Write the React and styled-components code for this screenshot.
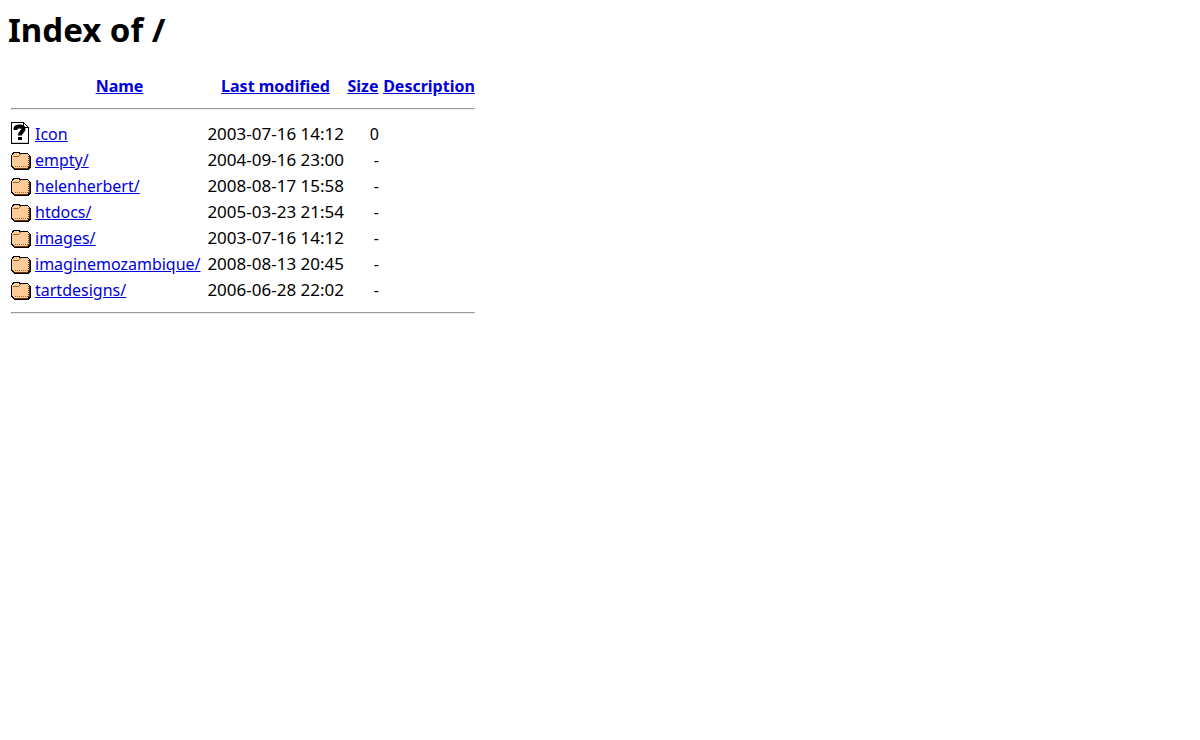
import React from 'react';
import styled, { createGlobalStyle } from 'styled-components';

const GlobalStyle = createGlobalStyle`
  body {
    margin: 8px;
    background: #fff;
    color: #000;
    font-family: "Noto Sans", "Open Sans", sans-serif;
    font-size: 16px;
    line-height: 22px;
  }
`;

const Title = styled.h1`
  margin: 0 0 19px;
  font-size: 33px;
  line-height: 44px;
  font-weight: 700;
`;

const Listing = styled.table`
  border-collapse: separate;
  border-spacing: 2px;
`;

const Column = styled.col`
  width: ${(p) => p.$width}px;
`;

const HeadCell = styled.th`
  padding: 2px 1px 0;
  font-weight: 700;
  text-align: center;
  white-space: nowrap;
`;

const Cell = styled.td`
  padding: 2px 1px 0;
  text-align: ${(p) => p.$align || 'left'};
  white-space: nowrap;
`;

const DateCell = styled(Cell)`
  padding: 2px 0 0;
  font-size: 17px;
`;

const IconCell = styled(Cell)`
  padding: 1px;
  vertical-align: top;
`;

const RuleCell = styled(Cell)`
  padding: 1px;
`;

const Link = styled.a`
  color: #0000dd;
  text-decoration: underline;
`;

const Rule = styled.hr`
  margin: 8px 0;
  border: 1px solid;
  border-color: #9a9a9a #eee #eee #9a9a9a;
`;

const Icon = styled.svg`
  display: block;
  width: 20px;
  height: 22px;
`;

const FolderIcon = () => (
  <Icon viewBox="0 0 20 22" shapeRendering="crispEdges" role="img" aria-label="Folder">
    <path d="M2 4H9V5H17V6H18V7H19V8H20V20H19V21H18V22H3V21H2V20H1V19H0V7H1V5H2Z" fill="#000" />
    <path d="M3 5H8V6H17V7H18V19H17V20H3V19H2V18H1V7H2V6H3Z" fill="#ffcc99" />
    <path d="M2 8H8V9H2ZM8 7H9V8H8ZM9 6H10V7H9Z" fill="#996633" />
    <path d="M18 8H19V19H18ZM3 20H17V21H3Z" fill="#663300" />
    <path d="M17.5 8V19" stroke="#664d33" strokeWidth="1" strokeDasharray="1 1" />
    <path d="M4 18.5H17" stroke="#996633" strokeWidth="1" strokeDasharray="1 1" />
  </Icon>
);

const UnknownIcon = () => (
  <Icon viewBox="0 0 20 22" role="img" aria-label="Unknown file">
    <g shapeRendering="crispEdges">
      <path d="M0 0H13V1H14V2H15V3H16V4H17V5H18V22H0Z" fill="#000" />
      <path d="M1 1H12V6H17V20H1Z" fill="#fff" />
      <path d="M13 2H14V3H15V4H16V5H13Z" fill="#fff" />
      <path d="M1 20H17V21H1Z" fill="#ccc" />
    </g>
    <path d="M4.5 8V7C4.5 5 6 4.5 8.5 4.5C11 4.5 12.5 5 12.5 7C12.5 9.5 9 9.5 9 13.5" fill="none" stroke="#000" strokeWidth="4" />
    <path d="M7 15H11V18H7Z" fill="#000" shapeRendering="crispEdges" />
  </Icon>
);

const widths = [22, 171, 137, 34, 94];

const headings = ['Name', 'Last modified', 'Size', 'Description'];

const entries = [
  { name: 'Icon', modified: '2003-07-16 14:12', size: '0' },
  { name: 'empty/', modified: '2004-09-16 23:00', size: '-' },
  { name: 'helenherbert/', modified: '2008-08-17 15:58', size: '-' },
  { name: 'htdocs/', modified: '2005-03-23 21:54', size: '-' },
  { name: 'images/', modified: '2003-07-16 14:12', size: '-' },
  { name: 'imaginemozambique/', modified: '2008-08-13 20:45', size: '-' },
  { name: 'tartdesigns/', modified: '2006-06-28 22:02', size: '-' },
];

const RuleRow = () => (
  <tr>
    <RuleCell colSpan={5}>
      <Rule />
    </RuleCell>
  </tr>
);

export default function App() {
  return (
    <>
      <GlobalStyle />
      <main>
        <Title>Index of /</Title>
        <Listing>
          <colgroup>
            {widths.map((width, i) => (
              <Column key={i} $width={width} />
            ))}
          </colgroup>
          <thead>
            <tr>
              <Cell />
              {headings.map((heading) => (
                <HeadCell key={heading} scope="col">
                  <Link href="#">{heading}</Link>
                </HeadCell>
              ))}
            </tr>
          </thead>
          <tbody>
            <RuleRow />
            {entries.map((entry) => (
              <tr key={entry.name}>
                <IconCell>{entry.name.endsWith('/') ? <FolderIcon /> : <UnknownIcon />}</IconCell>
                <Cell>
                  <Link href={entry.name}>{entry.name}</Link>
                </Cell>
                <DateCell $align="right">{entry.modified}</DateCell>
                <Cell $align="right">{entry.size}</Cell>
                <Cell />
              </tr>
            ))}
            <RuleRow />
          </tbody>
        </Listing>
      </main>
    </>
  );
}
